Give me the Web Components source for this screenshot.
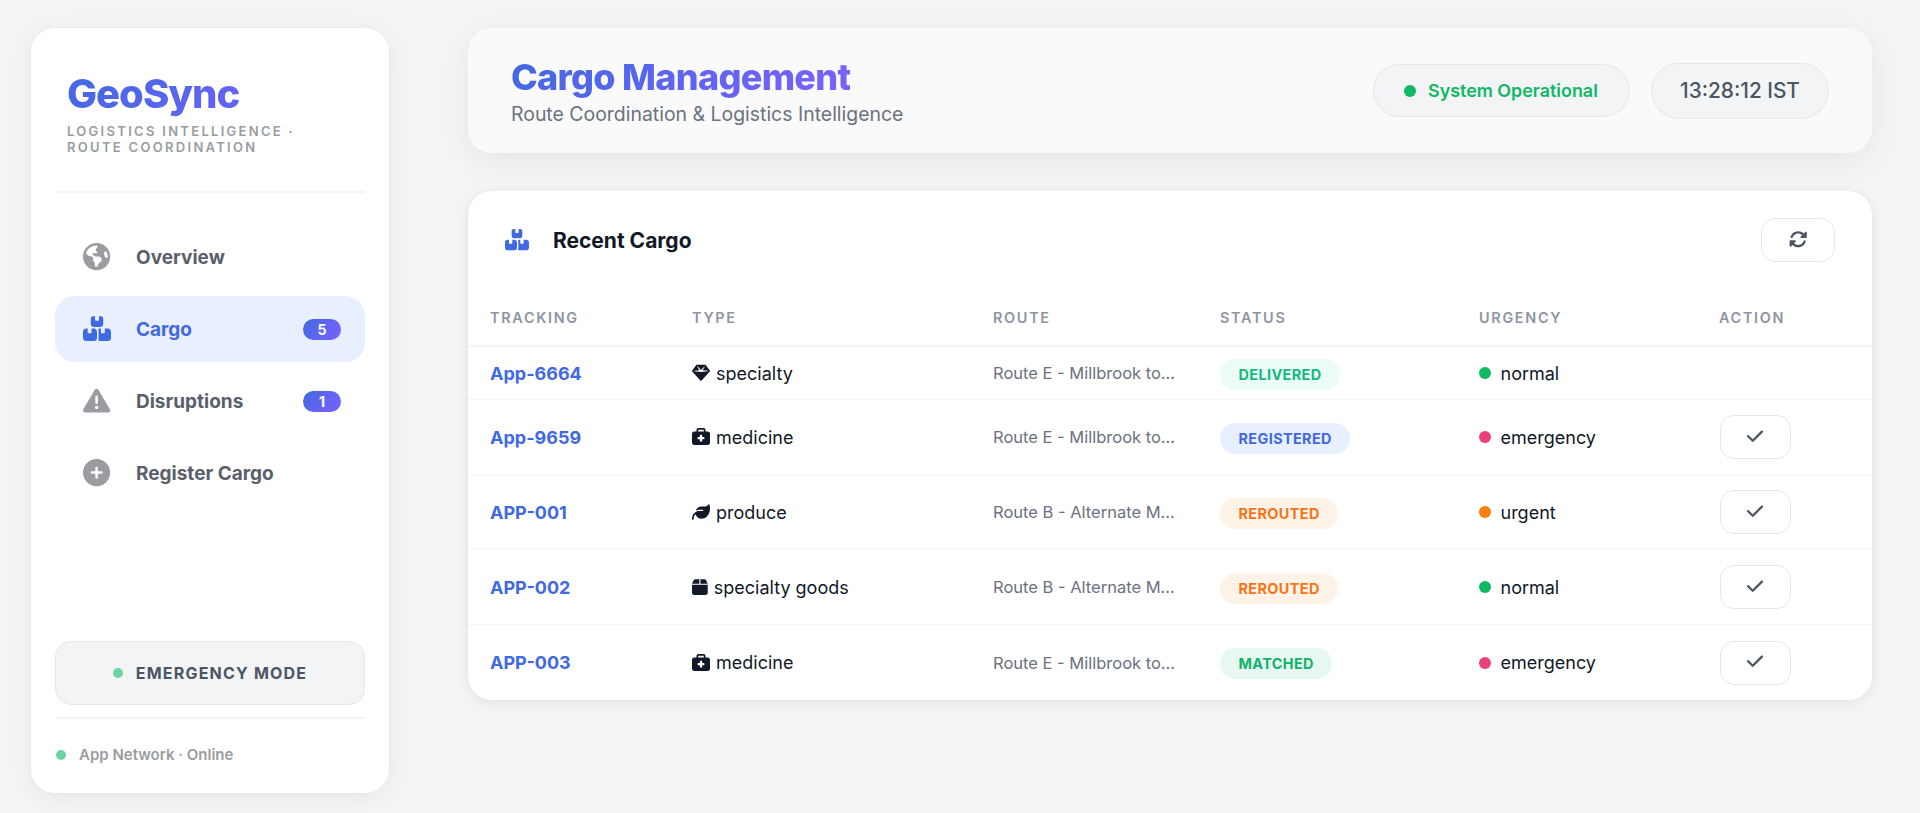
<!DOCTYPE html>
<html lang="en"><head><meta charset="utf-8"><title>GeoSync</title>
<style>
html,body{margin:0;height:100%;overflow:hidden}
body{background:#f3f4f6;font-family:Inter,"Liberation Sans",sans-serif;color:#111827}
</style></head>
<body>
<geo-app>
  <geo-sidebar slot="side">
    <nav-item icon="earth">Overview</nav-item>
    <nav-item icon="boxes" active badge="5">Cargo</nav-item>
    <nav-item icon="warn" badge="1">Disruptions</nav-item>
    <nav-item icon="plus">Register Cargo</nav-item>
  </geo-sidebar>
  <geo-header slot="main" heading="Cargo Management" sub="Route Coordination &amp; Logistics Intelligence"></geo-header>
  <cargo-card slot="main" heading="Recent Cargo">
    <cargo-row head></cargo-row>
    <cargo-row tracking="App-6664" icon="gem" type="specialty" route="Route E - Millbrook to..." status="delivered" urgency="normal" noaction></cargo-row>
    <cargo-row tracking="App-9659" icon="med" type="medicine" route="Route E - Millbrook to..." status="registered" urgency="emergency"></cargo-row>
    <cargo-row tracking="APP-001" icon="leaf" type="produce" route="Route B - Alternate M..." status="rerouted" urgency="urgent"></cargo-row>
    <cargo-row tracking="APP-002" icon="box" type="specialty goods" route="Route B - Alternate M..." status="rerouted" urgency="normal"></cargo-row>
    <cargo-row tracking="APP-003" icon="med" type="medicine" route="Route E - Millbrook to..." status="matched" urgency="emergency" last></cargo-row>
  </cargo-card>
</geo-app>
<script>
const ICONS={
earth:[512,"M57.7 193l9.4 16.4c8.3 14.5 21.9 25.2 38 29.8L163 255.7c17.2 4.9 29 20.6 29 38.5v39.9c0 11 6.2 21 16 25.9s16 14.9 16 25.9v39c0 15.6 14.9 26.9 29.9 22.6c16.1-4.6 28.6-17.5 32.7-33.8l2.8-11.2c4.2-16.9 15.2-31.4 30.3-40l8.1-4.6c15-8.5 24.2-24.5 24.2-41.7v-8.3c0-12.7-5.1-24.9-14.1-33.9l-3.9-3.9c-9-9-21.2-14.1-33.9-14.1H257c-11.1 0-22.1-2.9-31.8-8.4l-34.5-19.7c-4.3-2.5-7.6-6.5-9.2-11.2c-3.2-9.6 1.1-20 10.2-24.5l5.9-3c6.6-3.3 14.3-3.9 21.3-1.5l23.2 7.7c8.2 2.7 17.2-.4 21.9-7.5c4.7-7 4.2-16.3-1.2-22.8l-13.6-16.3c-10-12-9.9-29.5 .3-41.3l15.7-18.3c8.8-10.3 10.2-25 3.5-36.7l-2.4-4.2c-3.5-.2-6.9-.3-10.4-.3C163.1 48 84.4 108.9 57.7 193zM464 256c0-36.8-9.6-71.4-26.4-101.5L412 164.8c-15.7 6.3-23.8 23.8-18.5 39.8l16.9 50.7c3.5 10.4 12 18.3 22.6 20.9l29.1 7.3c1.2-9 1.8-18.2 1.8-27.5zM0 256a256 256 0 1 1 512 0A256 256 0 1 1 0 256z"],
boxes:[576,"M248 0H208c-26.5 0-48 21.5-48 48V160c0 35.3 28.7 64 64 64H352c35.3 0 64-28.7 64-64V48c0-26.5-21.5-48-48-48H328V80c0 8.8-7.2 16-16 16H264c-8.8 0-16-7.2-16-16V0zM64 256c-35.3 0-64 28.7-64 64V448c0 35.3 28.7 64 64 64H224c35.3 0 64-28.7 64-64V320c0-35.3-28.7-64-64-64H176v80c0 8.8-7.2 16-16 16H112c-8.8 0-16-7.2-16-16V256H64zM352 512H512c35.3 0 64-28.7 64-64V320c0-35.3-28.7-64-64-64H448v80c0 8.8-7.2 16-16 16H384c-8.8 0-16-7.2-16-16V256H352c-15 0-28.8 5.2-39.7 13.9c4.9 10.4 7.7 22 7.7 34.1V464c0 12-2.8 23.7-7.7 34.1C323.2 506.8 337 512 352 512z"],
warn:[512,"M256 32c14.2 0 27.3 7.5 34.5 19.8l216 368c7.3 12.4 7.3 27.7 .2 40.1S486.3 480 472 480H40c-14.3 0-27.6-7.7-34.7-20.1s-7-27.8 .2-40.1l216-368C228.7 39.5 241.8 32 256 32zm0 128c-13.3 0-24 10.7-24 24V296c0 13.3 10.7 24 24 24s24-10.7 24-24V184c0-13.3-10.7-24-24-24zm32 224a32 32 0 1 0 -64 0 32 32 0 1 0 64 0z"],
plus:[512,"M256 512A256 256 0 1 0 256 0a256 256 0 1 0 0 512zM232 344V280H168c-13.3 0-24-10.7-24-24s10.7-24 24-24h64V168c0-13.3 10.7-24 24-24s24 10.7 24 24v64h64c13.3 0 24 10.7 24 24s-10.7 24-24 24H280v64c0 13.3-10.7 24-24 24s-24-10.7-24-24z"],
sync:[512,"M142.9 142.9c-17.5 17.5-30.1 38-37.8 59.8c-5.9 16.7-24.2 25.4-40.8 19.5s-25.4-24.2-19.5-40.8C55.6 150.7 73.2 122 97.6 97.6c87.2-87.2 228.3-87.5 315.8-1L455 55c6.9-6.9 17.2-8.9 26.2-5.2s14.8 12.5 14.8 22.2V200c0 13.3-10.7 24-24 24H344c-9.7 0-18.5-5.8-22.2-14.8s-1.7-19.3 5.2-26.2l41.1-41.1c-62.6-61.5-163.1-61.2-225.3 1zM16 312c0-13.3 10.7-24 24-24l128 0c9.7 0 18.5 5.8 22.2 14.8s1.7 19.3-5.2 26.2l-41.1 41.1c62.6 61.5 163.1 61.2 225.3-1c17.5-17.5 30.1-38 37.8-59.8c5.9-16.7 24.2-25.4 40.8-19.5s25.4 24.2 19.5 40.8c-11.1 31.4-29 60.1-53.1 84.5c-87.2 87.2-228.3 87.5-315.8 1L57 457c-6.9 6.9-17.2 8.9-26.2 5.2S16 449.7 16 440V312z"],
check:[448,"M438.6 105.4c12.5 12.5 12.5 32.8 0 45.3l-256 256c-12.5 12.5-32.8 12.5-45.3 0l-128-128c-12.5-12.5-12.5-32.8 0-45.3s32.8-12.5 45.3 0L160 338.7 393.4 105.4c12.5-12.5 32.8-12.5 45.3 0z"],
gem:[512,"M116.7 33.8c4.5-6.1 11.7-9.8 19.3-9.8H376c7.6 0 14.8 3.6 19.3 9.8l112 152c6.8 9.2 6.1 21.9-1.5 30.4l-232 256c-4.5 5-11 7.9-17.8 7.9s-13.2-2.9-17.8-7.9l-232-256c-7.7-8.5-8.3-21.2-1.5-30.4l112-152zm38.5 39.8c-3.3 2.5-4.2 7-2.1 10.5l57.4 95.6L63.3 192c-4.1 .3-7.3 3.8-7.3 8s3.2 7.6 7.3 8l192 16c.4 0 .9 0 1.3 0l192-16c4.1-.3 7.3-3.8 7.3-8s-3.2-7.6-7.3-8L301.5 179.8l57.4-95.6c2.1-3.5 1.2-8-2.1-10.5s-7.9-2-10.7 1L256 172.2 165.9 74.6c-2.8-3-7.4-3.4-10.7-1z"],
med:[512,"M184 48H328c4.4 0 8 3.6 8 8V96H176V56c0-4.4 3.6-8 8-8zm-56 8V96H64C28.7 96 0 124.7 0 160V416c0 35.3 28.7 64 64 64H448c35.3 0 64-28.7 64-64V160c0-35.3-28.7-64-64-64H384V56c0-30.9-25.1-56-56-56H184c-30.9 0-56 25.1-56 56zm96 152c0-8.8 7.2-16 16-16h32c8.8 0 16 7.2 16 16v48h48c8.8 0 16 7.2 16 16v32c0 8.8-7.2 16-16 16H288v48c0 8.8-7.2 16-16 16H240c-8.8 0-16-7.2-16-16V320H176c-8.8 0-16-7.2-16-16V272c0-8.8 7.2-16 16-16h48V208z"],
leaf:[512,"M272 96c-78.6 0-145.1 51.5-167.7 122.5c33.6-17 71.5-26.5 111.7-26.5h88c8.8 0 16 7.2 16 16s-7.2 16-16 16H288 216s0 0 0 0c-16.6 0-32.7 1.9-48.2 5.4c-25.9 5.9-50 16.4-71.4 30.7c0 0 0 0 0 0C38.3 298.8 0 364.9 0 440v16c0 13.3 10.7 24 24 24s24-10.7 24-24V440c0-48.7 20.7-92.5 53.8-123.2C121.6 392.3 190.3 448 272 448l1 0c132.1-.7 239-130.9 239-291.4c0-42.6-7.5-83.1-21.1-119.6c-2.6-6.9-12.7-6.6-16.2 .1C455.1 73.6 416.2 96 372 96H272z"],
box:[448,"M50.7 58.5L0 160H208V32H93.7C75.5 32 58.9 42.3 50.7 58.5zM240 160H448L397.3 58.5C389.1 42.3 372.5 32 354.3 32H240V160zm208 32H0V416c0 35.3 28.7 64 64 64H384c35.3 0 64-28.7 64-64V192z"]};

class Base extends HTMLElement{
  render(html){ if(!this.shadowRoot) this.attachShadow({mode:'open'}); this.shadowRoot.innerHTML=html; }
  connectedCallback(){ this.build(); }
}
customElements.define('fa-i',class extends Base{
  build(){const [w,d]=ICONS[this.getAttribute('name')];
    this.render(`<style>:host{display:inline-block;height:1em;width:${w/512}em;line-height:0;vertical-align:-.125em}svg{display:block;width:100%;height:100%;fill:currentColor}</style><svg viewBox="0 0 ${w} 512" aria-hidden="true"><path d="${d}"/></svg>`);}
});
customElements.define('geo-app',class extends Base{
  build(){this.render(`<style>
  :host{display:flex;box-sizing:border-box;height:813px;padding:28px 48px 20px 31px;gap:79px}
  .side{display:flex;flex:none}
  .main{flex:1;min-width:0;display:flex;flex-direction:column;gap:38px}
  </style><div class="side"><slot name="side"></slot></div><div class="main"><slot name="main"></slot></div>`);}
});
customElements.define('geo-sidebar',class extends Base{
  build(){this.render(`<style>
  :host{display:flex;flex-direction:column;box-sizing:border-box;width:358px;background:#fff;border-radius:24px;padding:0 24px;box-shadow:0 4px 24px rgba(0,0,0,.06),0 0 0 1px rgba(0,0,0,.012)}
  .brand{padding:42px 12px 36px;border-bottom:2px solid #f3f4f6}
  h1{margin:0;font-size:40px;line-height:48px;font-weight:800;letter-spacing:-1px;background:linear-gradient(135deg,#4169e1,#7b61ff);-webkit-background-clip:text;background-clip:text;color:transparent}
  .tag{margin-top:5px;font-size:13px;line-height:16px;font-weight:600;letter-spacing:2.3px;color:#9a9ca1;text-transform:uppercase;white-space:nowrap}
  nav{display:flex;flex-direction:column;gap:6px;padding-top:31px}
  .em{margin-top:auto;height:64px;box-sizing:border-box;display:flex;align-items:center;justify-content:center;gap:13px;background:#f3f4f6;border:1px solid #e5e7eb;border-radius:16px;font-size:16px;font-weight:700;letter-spacing:1.2px;color:#4b5563}
  .em i,.foot i{width:10px;height:10px;border-radius:50%;background:#6ed3a3;flex:none}
  .foot{margin-top:12px;border-top:2px solid #f3f4f6;height:76px;box-sizing:border-box;display:flex;align-items:flex-start;gap:13px;padding:26px 1px 0;line-height:20px;font-size:15px;font-weight:600;color:#9a9ca1}
  .foot i{margin-top:5px}
  </style>
  <div class="brand"><h1>GeoSync</h1><div class="tag">Logistics Intelligence ·<br>Route Coordination</div></div>
  <nav><slot></slot></nav>
  <div class="em"><i></i><span>EMERGENCY MODE</span></div>
  <div class="foot"><i></i><span>App Network · Online</span></div>`);}
});
customElements.define('nav-item',class extends Base{
  build(){const a=this.hasAttribute('active'),b=this.getAttribute('badge');
  this.render(`<style>
  :host{display:flex;align-items:center;height:66px;box-sizing:border-box;padding:0 24px 0 28px;border-radius:20px;font-size:19px;font-family:Inter,sans-serif;font-weight:700;color:${a?'#4169e1':'#5b5f6b'};background:${a?'#e8effe':'transparent'}}
  .ic{width:28px;display:flex;justify-content:center;margin-right:25px;font-size:27.2px;color:${a?'#4169e1':'#9a9ca1'};line-height:0}
  .t{flex:1}
  .b{width:38px;height:21px;border-radius:11px;background:linear-gradient(135deg,#4169e1,#7b61ff);color:#fff;font:700 14px/21px Inter,sans-serif;text-align:center}
  </style><span class="ic"><fa-i name="${this.getAttribute('icon')}"></fa-i></span><span class="t"><slot></slot></span>${b?`<span class="b">${b}</span>`:''}`);}
});
customElements.define('geo-header',class extends Base{
  build(){this.render(`<style>
  :host{display:flex;align-items:center;justify-content:space-between;box-sizing:border-box;height:125px;padding:0 43px;background:#fafafa;border-radius:24px;box-shadow:0 8px 32px rgba(0,0,0,.06)}
  h2{margin:0;width:fit-content;font-size:36px;line-height:42px;font-weight:800;letter-spacing:-.7px;background:linear-gradient(135deg,#4169e1,#7b61ff);-webkit-background-clip:text;background-clip:text;color:transparent}
  p{margin:4px 0 0;font-size:19.45px;line-height:24px;color:#6b7280}
  .r{display:flex;align-items:center;gap:21px}
  .pill{display:flex;align-items:center;box-sizing:border-box;border:1px solid #e5e7eb;background:#f3f4f6;border-radius:30px}
  .op{width:257px;height:53px;gap:12px;padding-left:30px;color:#10b866;font-size:17.9px;font-weight:600}
  .op i{width:12px;height:12px;border-radius:50%;background:#10b866}
  .tm{width:178px;height:56px;justify-content:center;color:#4b5563;font-size:20.8px;font-weight:500}
  </style><div><h2>${this.getAttribute('heading')}</h2><p>${this.getAttribute('sub').replace('&','&amp;')}</p></div>
  <div class="r"><div class="pill op"><i></i><span>System Operational</span></div><div class="pill tm">13:28:12 IST</div></div>`);}
});
customElements.define('cargo-card',class extends Base{
  build(){this.render(`<style>
  :host{display:block;background:#fff;border-radius:24px;box-shadow:0 2px 12px rgba(0,0,0,.08);overflow:hidden;height:509px}
  .top{display:flex;align-items:center;height:98px;padding:0 37px;box-sizing:border-box;color:#111827}
  .ic{font-size:21.3px;color:#4169e1;margin-right:24px;line-height:0}
  h3{margin:0;flex:1;font-size:21px;font-weight:700}
  button{width:74px;height:44px;box-sizing:border-box;background:#fff;border:1px solid #e5e7eb;border-radius:14px;color:#4b5563;font-size:18.4px;padding:0}
  </style><div class="top"><span class="ic"><fa-i name="boxes"></fa-i></span><h3>${this.getAttribute('heading')}</h3><button aria-label="refresh"><fa-i name="sync"></fa-i></button></div><slot></slot>`);}
});
const ST={delivered:['#ecfdf5','#10b981','DELIVERED'],registered:['#e8effe','#4169e1','REGISTERED'],rerouted:['#fff3e8','#f97316','REROUTED'],matched:['#e6f8f1','#10b369','MATCHED']};
const UR={normal:'#10b866',emergency:'#ec4079',urgent:'#f97c0e'};
customElements.define('cargo-row',class extends Base{
  build(){const g=n=>this.getAttribute(n),h=this.hasAttribute('head');
  const css=`<style>
  :host{display:grid;grid-template-columns:202px 301px 227px 259px 240px 1fr;align-items:center;box-sizing:border-box;height:${h?58:g('noaction')!==null?53:75}px;border-bottom:${h?2:1}px solid #f3f4f6;font-size:18px;color:#111827}
  :host([last]){border-bottom:0;height:76px;padding-bottom:1px}
  .c{padding-left:22px;display:flex;align-items:center;white-space:nowrap}
  .h{font-size:14.4px;font-weight:600;letter-spacing:1.7px;color:#8e95a2}
  .t{color:#4169e1;font-weight:700;font-size:18px}
  .ty{font-size:18px;display:inline-flex;margin-right:6px;color:#111827;line-height:0}
  .r{color:#6b7280;font-size:16.5px}
  .s{height:31px;border-radius:16px;padding:0 18.5px;margin-top:2px;display:inline-flex;align-items:center;font-size:14.4px;font-weight:700;letter-spacing:.4px}
  .d{width:12px;height:12px;border-radius:50%;margin-right:9.5px}
  button{width:71px;height:44px;box-sizing:border-box;background:#fff;border:1px solid #e5e7eb;border-radius:14px;color:#4b5563;font-size:18.4px;padding:0}
  </style>`;
  if(h){this.render(css+['TRACKING','TYPE','ROUTE','STATUS','URGENCY','ACTION'].map(x=>`<div class="c h">${x}</div>`).join(''));return;}
  const s=ST[g('status')],btn=this.hasAttribute('noaction')?'':`<button aria-label="confirm"><fa-i name="check"></fa-i></button>`;
  this.render(css+`<div class="c t">${g('tracking')}</div>
  <div class="c"><span class="ty"><fa-i name="${g('icon')}"></fa-i></span><span>${g('type')}</span></div>
  <div class="c r">${g('route')}</div>
  <div class="c"><span class="s" style="background:${s[0]};color:${s[1]}">${s[2]}</span></div>
  <div class="c"><span class="d" style="background:${UR[g('urgency')]}"></span><span>${g('urgency')}</span></div>
  <div class="c" style="padding-left:23px">${btn}</div>`);}
});
</script>
</body></html>
